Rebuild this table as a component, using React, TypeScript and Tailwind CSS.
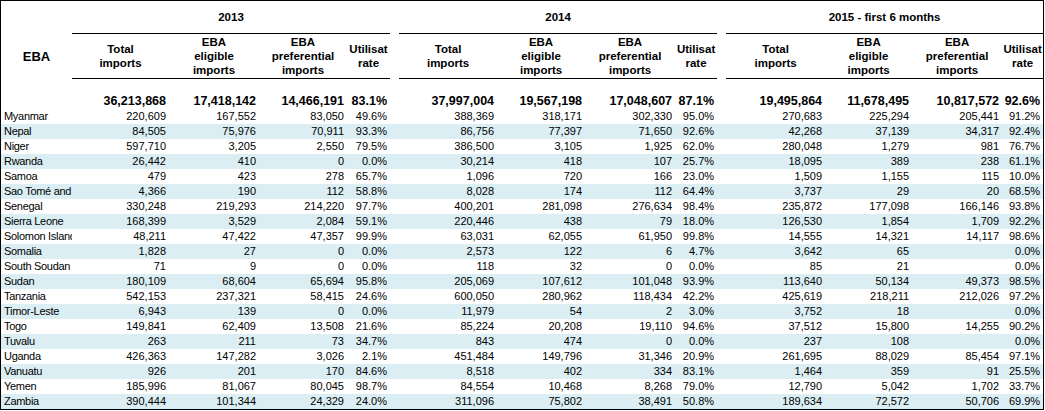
const groups = [
  { year: "2013", totals: ["36,213,868", "17,418,142", "14,466,191", "83.1%"] },
  { year: "2014", totals: ["37,997,004", "19,567,198", "17,048,607", "87.1%"] },
  { year: "2015 - first 6 months", totals: ["19,495,864", "11,678,495", "10,817,572", "92.6%"] },
];

// country, then 3 groups x (total, eligible, preferential, rate)
const rows: [string, ...string[]][] = [
  ["Myanmar", "220,609", "167,552", "83,050", "49.6%", "388,369", "318,171", "302,330", "95.0%", "270,683", "225,294", "205,441", "91.2%"],
  ["Nepal", "84,505", "75,976", "70,911", "93.3%", "86,756", "77,397", "71,650", "92.6%", "42,268", "37,139", "34,317", "92.4%"],
  ["Niger", "597,710", "3,205", "2,550", "79.5%", "386,500", "3,105", "1,925", "62.0%", "280,048", "1,279", "981", "76.7%"],
  ["Rwanda", "26,442", "410", "0", "0.0%", "30,214", "418", "107", "25.7%", "18,095", "389", "238", "61.1%"],
  ["Samoa", "479", "423", "278", "65.7%", "1,096", "720", "166", "23.0%", "1,509", "1,155", "115", "10.0%"],
  ["Sao Tomé and", "4,366", "190", "112", "58.8%", "8,028", "174", "112", "64.4%", "3,737", "29", "20", "68.5%"],
  ["Senegal", "330,248", "219,293", "214,220", "97.7%", "400,201", "281,098", "276,634", "98.4%", "235,872", "177,098", "166,146", "93.8%"],
  ["Sierra Leone", "168,399", "3,529", "2,084", "59.1%", "220,446", "438", "79", "18.0%", "126,530", "1,854", "1,709", "92.2%"],
  ["Solomon Islands", "48,211", "47,422", "47,357", "99.9%", "63,031", "62,055", "61,950", "99.8%", "14,555", "14,321", "14,117", "98.6%"],
  ["Somalia", "1,828", "27", "0", "0.0%", "2,573", "122", "6", "4.7%", "3,642", "65", "", "0.0%"],
  ["South Soudan", "71", "9", "0", "0.0%", "118", "32", "0", "0.0%", "85", "21", "", "0.0%"],
  ["Sudan", "180,109", "68,604", "65,694", "95.8%", "205,069", "107,612", "101,048", "93.9%", "113,640", "50,134", "49,373", "98.5%"],
  ["Tanzania", "542,153", "237,321", "58,415", "24.6%", "600,050", "280,962", "118,434", "42.2%", "425,619", "218,211", "212,026", "97.2%"],
  ["Timor-Leste", "6,943", "139", "0", "0.0%", "11,979", "54", "2", "3.0%", "3,752", "18", "", "0.0%"],
  ["Togo", "149,841", "62,409", "13,508", "21.6%", "85,224", "20,208", "19,110", "94.6%", "37,512", "15,800", "14,255", "90.2%"],
  ["Tuvalu", "263", "211", "73", "34.7%", "843", "474", "0", "0.0%", "237", "108", "", "0.0%"],
  ["Uganda", "426,363", "147,282", "3,026", "2.1%", "451,484", "149,796", "31,346", "20.9%", "261,695", "88,029", "85,454", "97.1%"],
  ["Vanuatu", "926", "201", "170", "84.6%", "8,518", "402", "334", "83.1%", "1,464", "359", "91", "25.5%"],
  ["Yemen", "185,996", "81,067", "80,045", "98.7%", "84,554", "10,468", "8,268", "79.0%", "12,790", "5,042", "1,702", "33.7%"],
  ["Zambia", "390,444", "101,344", "24,329", "24.0%", "311,096", "75,802", "38,491", "50.8%", "189,634", "72,572", "50,706", "69.9%"],
];

const colWidths = [
  "w-[71px]",
  "w-[97px]", "w-[90px]", "w-[88px]", "w-[43px]", "w-[9px]",
  "w-[98px]", "w-[88px]", "w-[90px]", "w-[42px]", "w-[9px]",
  "w-[99px]", "w-[87px]", "w-[90px]", "w-[41px]",
];

const headCell = "border-b border-black p-0 text-center align-middle font-bold leading-[14.3px]";

const SubHeaders = () => (
  <>
    <th className={headCell}>
      Total
      <br />
      imports
    </th>
    <th className={headCell}>
      EBA
      <br />
      eligible
      <br />
      imports
    </th>
    <th className={headCell}>
      EBA
      <br />
      preferential
      <br />
      imports
    </th>
    <th className={`${headCell} overflow-hidden whitespace-nowrap`}>
      Utilisat
      <br />
      rate
    </th>
  </>
);

export default function App() {
  return (
    <div className="bg-white w-[1045px] h-[411px] font-['Liberation_Sans',Arial,sans-serif] text-black">
      <div className="w-[1044px] h-[410px] border border-black overflow-hidden">
        <table className="table-fixed border-separate border-spacing-0 w-[1042px]">
          <colgroup>
            {colWidths.map((w, i) => (
              <col key={i} className={w} />
            ))}
          </colgroup>
          <thead className="text-[11.5px]">
            <tr className="h-[33px]">
              <th className="p-0" />
              {groups.map((g, i) => (
                <>
                  <th key={g.year} colSpan={4} className={headCell}>
                    {g.year}
                  </th>
                  {i < 2 && <th className="p-0" />}
                </>
              ))}
            </tr>
            <tr className="h-[45px]">
              <th className="p-0 text-center align-middle text-[13px] font-bold">EBA</th>
              <SubHeaders />
              <th className="p-0" />
              <SubHeaders />
              <th className="p-0" />
              <SubHeaders />
            </tr>
          </thead>
          <tbody className="text-[11px] leading-[15px]">
            <tr className="h-[15px]">
              <td colSpan={15} className="p-0" />
            </tr>
            <tr className="h-[15px] text-[12.5px] font-bold">
              <td className="p-0" />
              {groups.map((g, i) => (
                <>
                  {g.totals.map((t, j) => (
                    <td key={`${i}-${j}`} className="p-0 pr-[3px] text-right whitespace-nowrap">
                      {t}
                    </td>
                  ))}
                  {i < 2 && <td className="p-0" />}
                </>
              ))}
            </tr>
            {rows.map((r, idx) => {
              const [country, ...vals] = r;
              return (
                <tr key={country} className={`h-[15px] ${idx % 2 === 1 ? "bg-[#dbeef3]" : "bg-white"}`}>
                  <td className="p-0 pl-[3px] text-left whitespace-nowrap overflow-hidden tracking-[-0.3px]">
                    {country}
                  </td>
                  {vals.map((v, j) => (
                    <>
                      <td key={j} className="p-0 pr-[3px] text-right whitespace-nowrap">
                        {v}
                      </td>
                      {(j === 3 || j === 7) && <td className="p-0" />}
                    </>
                  ))}
                </tr>
              );
            })}
          </tbody>
        </table>
      </div>
    </div>
  );
}
